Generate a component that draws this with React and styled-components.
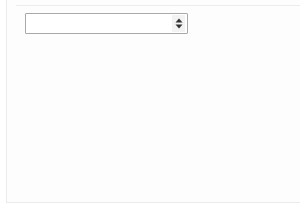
import React from 'react';
import styled, { createGlobalStyle } from 'styled-components';

const GlobalStyle = createGlobalStyle`
  html, body {
    margin: 0;
    padding: 0;
    background: #ffffff;
    font-family: "Liberation Sans", Arial, sans-serif;
  }
`;

const Page = styled.div`
  width: 300px;
  height: 210px;
  padding-left: 6px;
  box-sizing: border-box;
`;

const Panel = styled.div`
  height: 203px;
  border-left: 1px solid #ebebeb;
  border-bottom: 1px solid #ebebeb;
  background: #fdfdfd;
  box-sizing: border-box;
  padding-top: 5px;
`;

const Divider = styled.div`
  margin-left: 9px;
  height: 1px;
  background: #ececec;
`;

const Body = styled.div`
  padding: 7px 0 0 18px;
`;

const SelectBox = styled.div`
  position: relative;
  width: 163px;
  height: 21px;
  box-sizing: border-box;
  border: 1px solid #a9a9a9;
  border-radius: 1px;
  background: #ffffff;
  display: flex;
  justify-content: flex-end;
  align-items: center;
`;

const ArrowBox = styled.div`
  width: 13px;
  height: 17px;
  margin-right: 2px;
  background: #f3f3f3;
  display: flex;
  align-items: center;
  justify-content: center;
`;

export default function App() {
  return (
    <>
      <GlobalStyle />
      <Page>
        <Panel>
          <Divider />
          <Body>
            <SelectBox>
              <ArrowBox>
                <svg width="8" height="11" viewBox="0 0 8 11">
                  <path d="M4 0.5 L7.5 4.5 H0.5 Z" fill="#333" />
                  <path d="M4 10.5 L7.5 6.5 H0.5 Z" fill="#333" />
                </svg>
              </ArrowBox>
            </SelectBox>
          </Body>
        </Panel>
      </Page>
    </>
  );
}
